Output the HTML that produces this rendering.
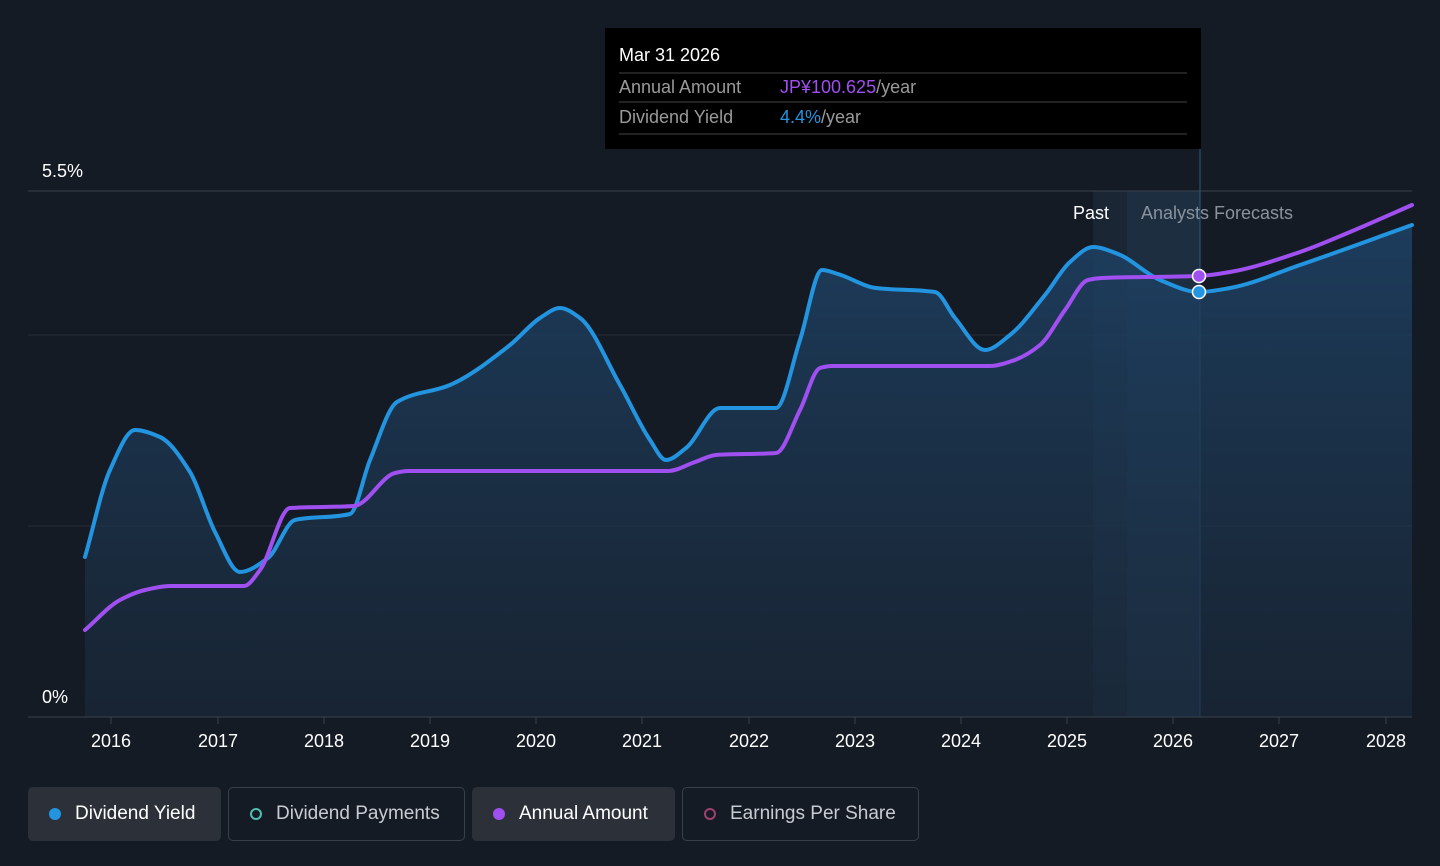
<!DOCTYPE html>
<html><head><style>
body{margin:0;background:#151b24;width:1440px;height:866px;overflow:hidden;font-family:"Liberation Sans",sans-serif;}
.leg{position:absolute;top:787px;height:54px;border-radius:5px;box-sizing:border-box;display:flex;align-items:center;font-size:19px;color:#fff;}
.dot{width:12px;height:12px;border-radius:50%;margin:0 14px 0 21px;box-sizing:border-box;}
</style></head><body>
<svg width="1440" height="866" style="position:absolute;left:0;top:0" font-family="Liberation Sans, sans-serif">
<defs><linearGradient id="g" x1="0" y1="0" x2="0" y2="1"><stop offset="0" stop-color="#1e4266" stop-opacity=".85"/><stop offset="1" stop-color="#1a2a3c" stop-opacity=".6"/></linearGradient></defs>
<rect x="1093" y="191" width="34" height="526" fill="#1b2634"/>
<rect x="1127" y="191" width="73" height="526" fill="#1d2e40"/>
<line x1="28" y1="191" x2="1412" y2="191" stroke="#3a414b"/>
<line x1="28" y1="335" x2="1412" y2="335" stroke="#262e39"/>
<line x1="28" y1="526" x2="1412" y2="526" stroke="#262e39"/>
<line x1="1200" y1="148" x2="1200" y2="717" stroke="#2b5a80"/>
<path id="fill" fill="url(#g)" d=""/>
<path id="blue" fill="none" stroke="#2394df" stroke-width="4" stroke-linejoin="round" stroke-linecap="round" d=""/>
<path id="purp" fill="none" stroke="#a04ff0" stroke-width="4" stroke-linejoin="round" stroke-linecap="round" d=""/>
<circle cx="1199" cy="276" r="6.5" fill="#a04ff0" stroke="#fff" stroke-width="1.5"/>
<circle cx="1199" cy="292" r="6.5" fill="#2394df" stroke="#fff" stroke-width="1.5"/>
<line x1="28" y1="717" x2="1412" y2="717" stroke="#3a414b"/>
<g fill="#fff" font-size="18">
<text x="42" y="177">5.5%</text><text x="42" y="703">0%</text>
<text x="1073" y="219">Past</text>
<text x="1141" y="219" fill="#8a929c">Analysts Forecasts</text>
</g>
<g fill="#fff" font-size="18" text-anchor="middle">
<text x="111" y="747">2016</text><text x="218" y="747">2017</text><text x="324" y="747">2018</text><text x="430" y="747">2019</text><text x="536" y="747">2020</text><text x="642" y="747">2021</text><text x="749" y="747">2022</text><text x="855" y="747">2023</text><text x="961" y="747">2024</text><text x="1067" y="747">2025</text><text x="1173" y="747">2026</text><text x="1279" y="747">2027</text><text x="1386" y="747">2028</text>
</g>
<g stroke="#3a414b"><line x1="111" y1="717" x2="111" y2="724"/><line x1="218" y1="717" x2="218" y2="724"/><line x1="324" y1="717" x2="324" y2="724"/><line x1="430" y1="717" x2="430" y2="724"/><line x1="536" y1="717" x2="536" y2="724"/><line x1="642" y1="717" x2="642" y2="724"/><line x1="749" y1="717" x2="749" y2="724"/><line x1="855" y1="717" x2="855" y2="724"/><line x1="961" y1="717" x2="961" y2="724"/><line x1="1067" y1="717" x2="1067" y2="724"/><line x1="1173" y1="717" x2="1173" y2="724"/><line x1="1279" y1="717" x2="1279" y2="724"/><line x1="1386" y1="717" x2="1386" y2="724"/></g>
<rect x="605" y="28" width="596" height="121" fill="#000"/>
<g font-size="18"><text x="619" y="61" fill="#fff">Mar 31 2026</text>
<line x1="619" y1="73" x2="1187" y2="73" stroke="#444"/>
<text x="619" y="93" fill="#9a9a9a">Annual Amount</text><text x="780" y="93" fill="#a04ff0">JP¥100.625<tspan fill="#9a9a9a">/year</tspan></text>
<line x1="619" y1="102" x2="1187" y2="102" stroke="#444"/>
<text x="619" y="123" fill="#9a9a9a">Dividend Yield</text><text x="780" y="123" fill="#2394df">4.4%<tspan fill="#9a9a9a">/year</tspan></text>
<line x1="619" y1="134" x2="1187" y2="134" stroke="#444"/></g>
</svg>
<div class="leg" style="left:28px;width:193px;background:#2c3139"><div class="dot" style="background:#2394df"></div>Dividend Yield</div>
<div class="leg" style="left:228px;width:237px;border:1.5px solid #3a4049;color:#c8ccd2"><div class="dot" style="border:2px solid #4fc0b0"></div>Dividend Payments</div>
<div class="leg" style="left:472px;width:203px;background:#2c3139"><div class="dot" style="background:#a04ff0"></div>Annual Amount</div>
<div class="leg" style="left:682px;width:237px;border:1.5px solid #3a4049;color:#c8ccd2"><div class="dot" style="border:2px solid #a0406f"></div>Earnings Per Share</div>
<script>
var B=[[85,557],[110,470],[135,430],[160,437],[190,472],[215,532],[240,572],[268,558],[295,520],[350,514],[370,460],[397,402],[450,385],[510,345],[540,318],[560,308],[580,318],[620,385],[650,440],[666,460],[686,448],[720,408],[776,408],[800,340],[822,270],[838,274],[876,288],[935,292],[955,318],[985,350],[1010,335],[1045,295],[1070,262],[1093,247],[1118,254],[1160,280],[1199,292],[1230,288],[1300,265],[1412,225]];
var P=[[85,630],[120,600],[145,590],[170,586],[244,586],[260,570],[290,508],[354,506],[395,473],[408,471],[668,471],[695,462],[716,455],[776,453],[800,410],[820,368],[832,366],[990,366],[1012,361],[1040,345],[1065,310],[1088,280],[1102,278],[1199,276],[1230,272],[1300,252],[1350,232],[1412,205]];
function sm(p){var n=p.length,m=[],s=[];
for(var i=0;i<n-1;i++)s[i]=(p[i+1][1]-p[i][1])/(p[i+1][0]-p[i][0]);
m[0]=s[0];m[n-1]=s[n-2];
for(i=1;i<n-1;i++){if(s[i-1]*s[i]<=0)m[i]=0;else{var h0=p[i][0]-p[i-1][0],h1=p[i+1][0]-p[i][0];m[i]=3*(h0+h1)/((2*h1+h0)/s[i-1]+(h1+2*h0)/s[i]);}}
var d="M"+p[0][0]+","+p[0][1];
for(i=0;i<n-1;i++){var h=(p[i+1][0]-p[i][0])/3;d+=" C"+(p[i][0]+h)+","+(p[i][1]+m[i]*h)+" "+(p[i+1][0]-h)+","+(p[i+1][1]-m[i+1]*h)+" "+p[i+1][0]+","+p[i+1][1];}
return d;}
var bd=sm(B);document.getElementById("blue").setAttribute("d",bd);
document.getElementById("fill").setAttribute("d",bd+" L1412,717 L85,717 Z");
document.getElementById("purp").setAttribute("d",sm(P));
</script>
</body></html>
